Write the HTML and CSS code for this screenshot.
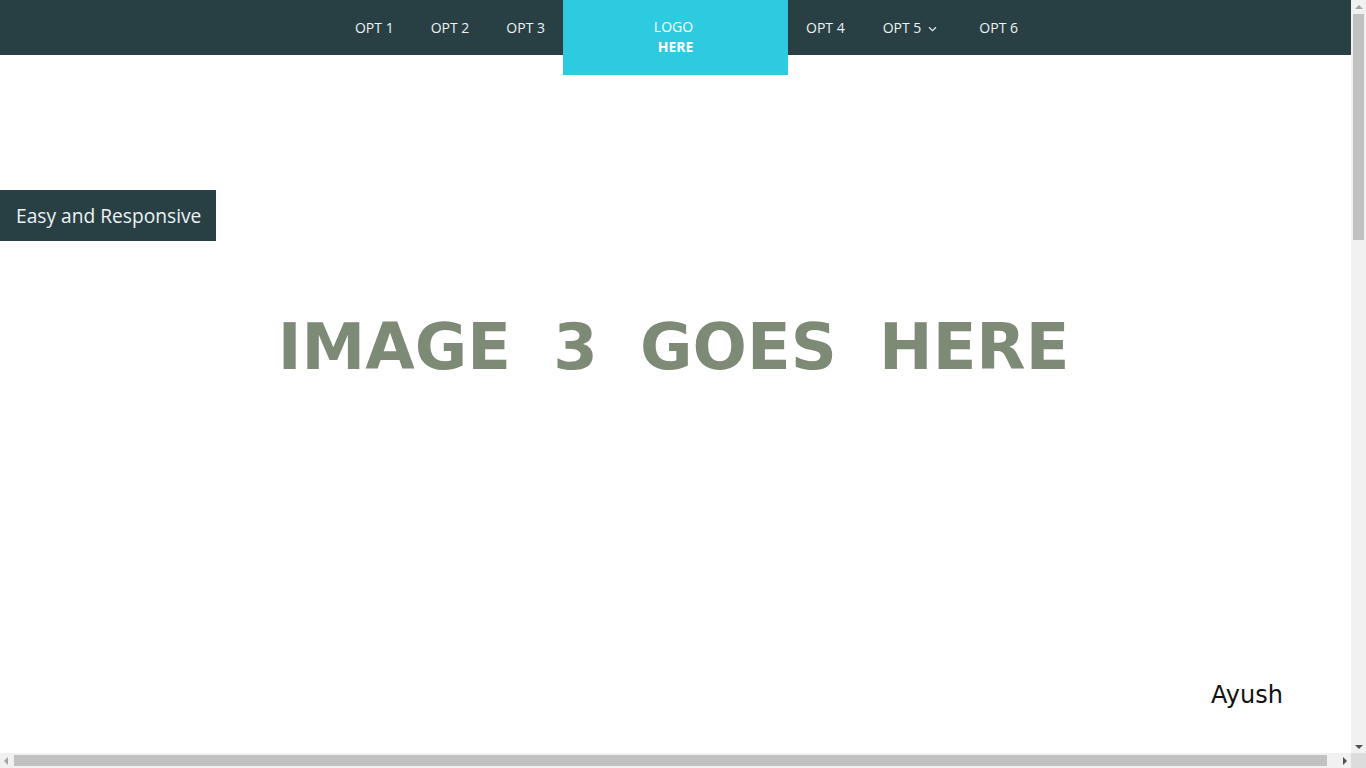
FILE: index.html
```html
<!DOCTYPE html>
<html lang="en">
<head>
<meta charset="utf-8">
<title>Slider</title>
<link rel="stylesheet" href="styles.css">
</head>
<body>
<div class="page">
  <header class="topbar">
    <ul class="menu menu-left">
      <li class="menu-item">OPT 1</li>
      <li class="menu-item">OPT 2</li>
      <li class="menu-item">OPT 3</li>
    </ul>
    <div class="logo">
      <span class="logo-top">LOGO</span>
      <span class="logo-bottom">HERE</span>
    </div>
    <ul class="menu menu-right">
      <li class="menu-item has-sub">OPT 4</li>
      <li class="menu-item has-sub">OPT 5
        <svg class="chev" width="9" height="6" viewBox="0 0 9 6"><path d="M1 1.2 L4.5 4.6 L8 1.2" fill="none" stroke="#e8eef0" stroke-width="1.2"/></svg>
      </li>
      <li class="menu-item">OPT 6</li>
    </ul>
  </header>
  <main class="slider">
    <section class="slide">
      <div class="caption">Easy and Responsive</div>
      <div class="slide-image">IMAGE 3 GOES HERE</div>
      <div class="author">Ayush</div>
    </section>
  </main>
</div>
<div class="sb sb-v">
  <span class="sb-arrow sb-up"></span>
  <span class="sb-thumb sb-thumb-v"></span>
  <span class="sb-arrow sb-down"></span>
</div>
<div class="sb sb-h">
  <span class="sb-arrow sb-left"></span>
  <span class="sb-thumb sb-thumb-h"></span>
  <span class="sb-arrow sb-right"></span>
</div>
<div class="sb-corner"></div>
</body>
</html>
```
FILE: styles.css
```css
html, body {
  margin: 0;
  padding: 0;
  background: #ffffff;
  overflow: hidden;
}
body {
  font-family: "Open Sans", "DejaVu Sans", sans-serif;
}
.page {
  width: calc(100vw - 15px);
  height: calc(100vh - 15px);
  overflow: hidden;
}
.topbar {
  display: grid;
  grid-template-columns: 1fr auto 1fr;
  height: 55px;
  background: #283f44;
  position: relative;
  z-index: 2;
}
.menu {
  list-style: none;
  margin: 0;
  padding: 0;
  display: flex;
  align-items: flex-start;
}
.menu-left {
  justify-content: flex-end;
}
.menu-right {
  justify-content: flex-start;
}
.menu-item {
  color: #eef2f3;
  font-size: 14px;
  line-height: 55px;
  padding: 0 18px;
  white-space: nowrap;
  display: flex;
  align-items: center;
}
.menu-left .menu-item {
  padding: 0 18px 0 19px;
}
.menu-left .menu-item:first-child {
  padding-left: 20px;
}
.has-sub {
  padding-right: 20px;
}
.has-sub + .has-sub {
  padding-right: 24px;
}
.chev {
  margin-left: 7px;
  margin-top: 2px;
}
.logo {
  width: 225px;
  height: 75px;
  background: #2ecbe0;
  color: #ffffff;
  font-size: 14px;
  display: flex;
  flex-direction: column;
  align-items: center;
  padding-top: 17px;
  box-sizing: border-box;
  line-height: 20px;
}
.logo-top {
  margin-left: -4px;
}
.logo-bottom {
  font-weight: 700;
}
.slider {
  position: relative;
}
.slide {
  position: relative;
  height: 713px;
  display: flex;
  align-items: center;
  justify-content: center;
}
.slide-image {
  font-family: "DejaVu Sans", sans-serif;
  font-weight: 700;
  font-size: 64px;
  color: #7d8a76;
  word-spacing: 20px;
  margin-top: -129px;
  margin-left: -4px;
}
.caption {
  position: absolute;
  left: 0;
  top: 135px;
  background: #283f44;
  color: #eef2f3;
  font-size: 19.2px;
  line-height: 27px;
  padding: 12px 15px 12px 16px;
}
.author {
  position: absolute;
  right: 68px;
  bottom: 59px;
  font-family: "DejaVu Sans", sans-serif;
  font-size: 24px;
  color: #111;
}
.sb {
  position: fixed;
  background: #f1f1f1;
  display: flex;
  align-items: center;
}
.sb-v {
  top: 0;
  right: 0;
  width: 15px;
  height: calc(100vh - 15px);
  flex-direction: column;
}
.sb-h {
  left: 0;
  bottom: 0;
  height: 15px;
  width: calc(100vw - 15px);
}
.sb-corner {
  position: fixed;
  right: 0;
  bottom: 0;
  width: 15px;
  height: 15px;
  background: #dcdcdc;
}
.sb-thumb {
  background: #c1c1c1;
}
.sb-thumb-v {
  width: 11px;
  height: 226px;
}
.sb-thumb-h {
  height: 11px;
  flex: 1;
  margin-right: 16px;
}
.sb-arrow {
  width: 0;
  height: 0;
  border: 4px solid transparent;
  flex: none;
}
.sb-up {
  border-bottom-color: #a3a3a3;
  border-top-width: 0;
  margin: 5px 0 5px;
}
.sb-down {
  border-top-color: #505050;
  border-bottom-width: 0;
  margin-top: auto;
  margin-bottom: 4px;
}
.sb-left {
  border-right-color: #a3a3a3;
  border-left-width: 0;
  margin: 0 6px 0 4px;
}
.sb-right {
  border-left-color: #505050;
  border-right-width: 0;
  margin-right: 4px;
}
```
